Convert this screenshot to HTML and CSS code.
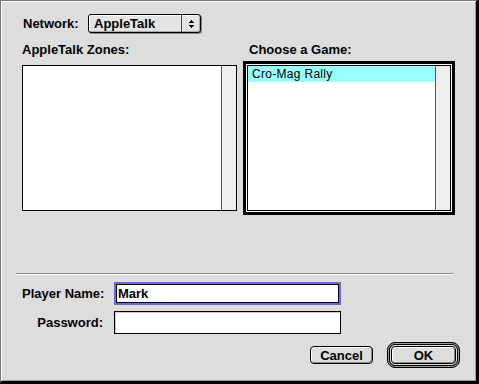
FILE: index.html
```html
<!DOCTYPE html>
<html lang="en">
<head>
    <meta charset="UTF-8">
    <title>Network Game</title>
    <link rel="stylesheet" href="styles.css">
</head>
<body>
    <div class="dialog">
        <div class="network-row">
            <span class="label network-label">Network:</span>
            <div class="popup">
                <span class="popup-text">AppleTalk</span>
                <span class="popup-arrows">
                    <svg width="5" height="8" viewBox="0 0 5 8">
                        <rect x="2" y="0" width="1" height="1"/>
                        <rect x="1" y="1" width="3" height="1"/>
                        <rect x="0" y="2" width="5" height="1"/>
                        <rect x="0" y="5" width="5" height="1"/>
                        <rect x="1" y="6" width="3" height="1"/>
                        <rect x="2" y="7" width="1" height="1"/>
                    </svg>
                </span>
            </div>
        </div>

        <div class="lists">
            <div class="list-col zones">
                <div class="label list-label">AppleTalk Zones:</div>
                <div class="listbox">
                    <div class="list-items"></div>
                    <div class="scrollbar"></div>
                </div>
            </div>
            <div class="list-col games">
                <div class="label list-label">Choose a Game:</div>
                <div class="listbox focused">
                    <div class="list-items">
                        <div class="list-item selected">Cro-Mag Rally</div>
                    </div>
                    <div class="scrollbar"></div>
                </div>
            </div>
        </div>

        <div class="separator"></div>

        <div class="fields">
            <label class="label field-label" for="playerName">Player Name:</label>
            <input type="text" id="playerName" class="field focused" value="Mark">
            <label class="label field-label" for="password">Password:</label>
            <input type="password" id="password" class="field">
        </div>

        <div class="buttons">
            <button class="btn cancel-btn">Cancel</button>
            <span class="default-ring"><button class="btn ok-btn">OK</button></span>
        </div>
    </div>
</body>
</html>
```

FILE: styles.css
```css
body {
    margin: 0;
    font-family: "Liberation Sans", Arial, sans-serif;
    font-size: 12px;
    color: #000;
    background: #ddd;
}
.dialog {
    width: 479px;
    height: 384px;
    box-sizing: border-box;
    background: #dddddd;
    border-left: 1px solid #777;
    border-top: 1px solid #777;
    border-right: 3px solid #000;
    border-bottom: 3px solid #000;
    box-shadow: inset 1px 1px 0 #fff, inset -1px -1px 0 #999;
    padding: 13px 16px 0 15px;
}
.label {
    font-weight: bold;
    font-size: 13px;
    line-height: 16px;
    white-space: nowrap;
}
.network-row {
    display: flex;
    align-items: center;
    height: 19px;
    padding-left: 7px;
}
.network-label {
    width: 65px;
}
.popup {
    display: flex;
    width: 113px;
    height: 19px;
    box-sizing: border-box;
    border: 1px solid #000;
    border-radius: 3px;
    background: #e4e4e4;
    box-shadow: 1px 1px 0 #888, inset 1px 1px 0 #fff, inset -1px -1px 0 #aaa;
}
.popup-text {
    flex: 1;
    padding-left: 5px;
    font-weight: bold;
    font-size: 13px;
    line-height: 17px;
}
.popup-arrows {
    width: 18px;
    border-left: 1px solid #444;
    display: flex;
    align-items: center;
    justify-content: center;
}
.lists {
    display: flex;
    gap: 10px;
    margin-top: 9px;
    padding-left: 6px;
}
.zones {
    width: 215px;
}
.games {
    width: 204px;
}
.games .list-label {
    padding-left: 2px;
}
.list-label {
    margin-bottom: 7px;
}
.listbox {
    display: flex;
    height: 146px;
    box-sizing: border-box;
    border: 1px solid #000;
    background: #fff;
}
.listbox.focused {
    box-shadow: 0 0 0 1px #fff, 0 0 0 4px #000;
}
.list-items {
    flex: 1;
}
.list-item {
    height: 16px;
    line-height: 16px;
    padding-left: 4px;
    letter-spacing: 0.3px;
}
.list-item.selected {
    background: #99ffff;
}
.scrollbar {
    width: 14px;
    border-left: 1px solid #555;
    background: #eeeeee;
}
.separator {
    width: 437px;
    height: 1px;
    margin-top: 62px;
    border-top: 1px solid #888;
    background: #fff;
}
.fields {
    display: grid;
    grid-template-columns: 81px 227px;
    grid-auto-rows: 23px;
    column-gap: 11px;
    row-gap: 6px;
    margin-top: 7px;
    padding-left: 6px;
    align-items: center;
}
.field-label {
    text-align: right;
}
.field {
    width: 227px;
    height: 23px;
    box-sizing: border-box;
    margin: 0;
    border: 1px solid #000;
    padding: 0 3px;
    background: #fff;
    font-family: "Liberation Sans", Arial, sans-serif;
    font-size: 13px;
    font-weight: bold;
    color: #000;
    outline: none;
    box-shadow: inset 1px 1px 0 #ccc;
}
.field.focused {
    border: 2px solid #6b6bd0;
    padding: 0 2px;
    box-shadow: inset 0 0 0 1px #000;
}
.buttons {
    display: flex;
    justify-content: flex-end;
    align-items: center;
    gap: 14px;
    margin-top: 8px;
}
.btn {
    height: 18px;
    box-sizing: border-box;
    margin: 0;
    padding: 0;
    border: 1px solid #000;
    border-radius: 4px;
    background: #dddddd;
    box-shadow: inset 1px 1px 0 #fff, inset -1px -1px 0 #888;
    font-family: "Liberation Sans", Arial, sans-serif;
    font-size: 13px;
    font-weight: bold;
    color: #000;
    line-height: 15px;
}
.cancel-btn {
    width: 63px;
}
.ok-btn {
    width: 65px;
}
.default-ring {
    display: flex;
    padding: 3px;
    border: 1px solid #000;
    border-radius: 8px;
    box-shadow: inset 0 0 0 1px #999, inset 0 0 0 2px #000;
}
```
